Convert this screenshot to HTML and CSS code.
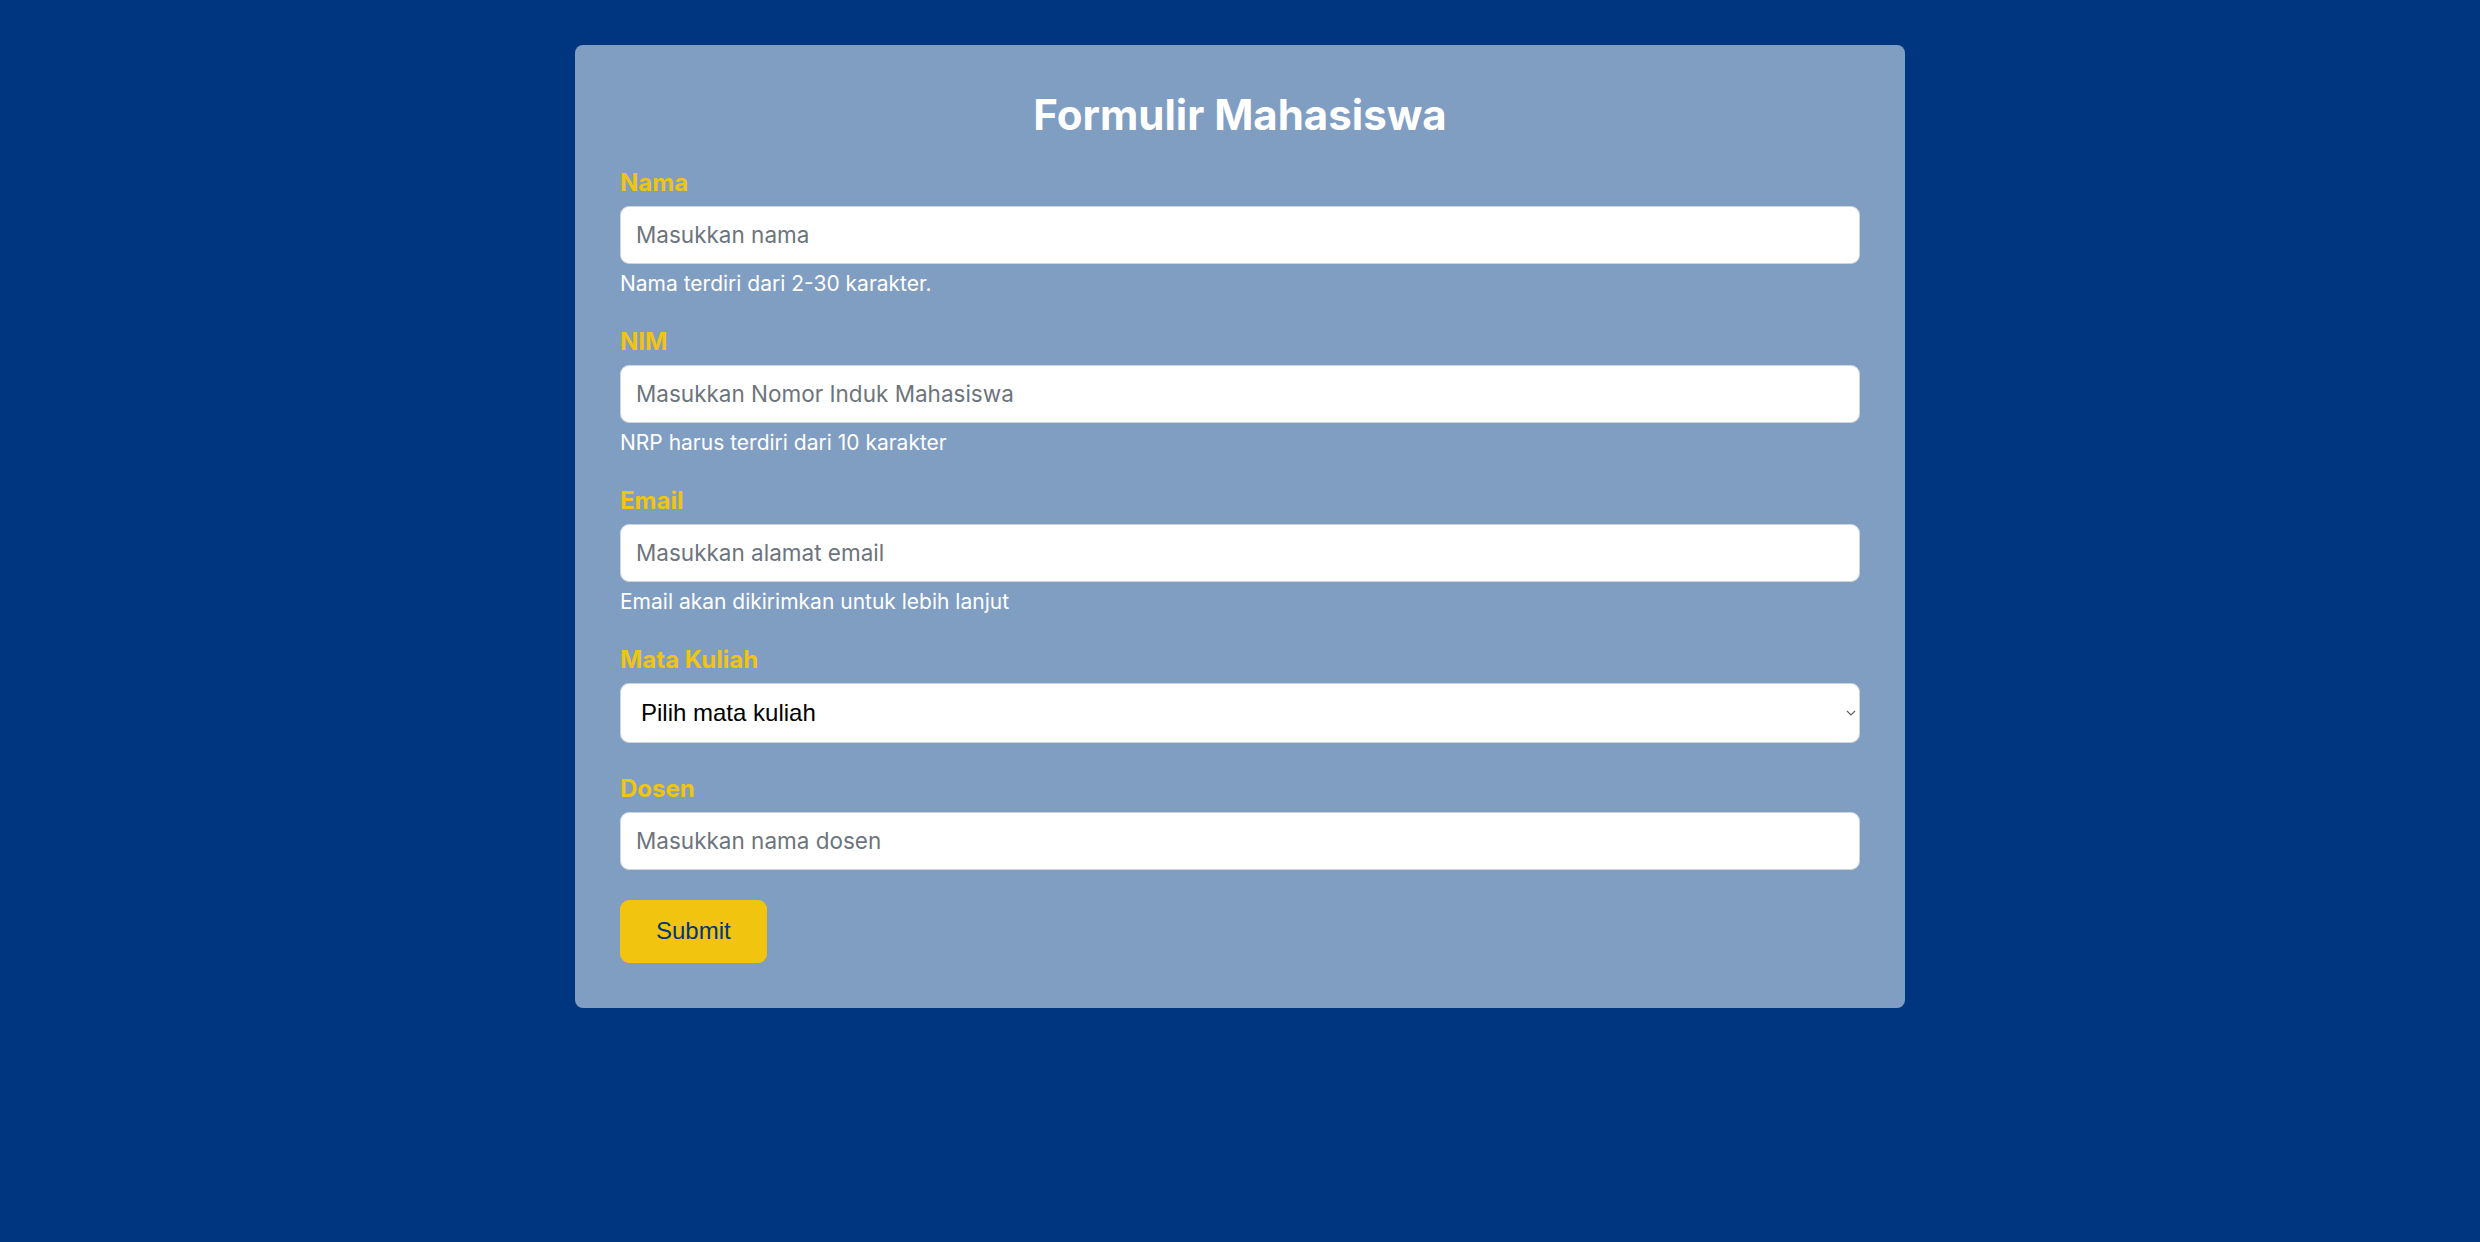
FILE: index.html
```html
<!DOCTYPE html>
<html lang="id">
<head>
<meta charset="utf-8">
<title>Formulir Mahasiswa</title>
<link rel="stylesheet" href="styles.css">
</head>
<body class="page">
  <main class="card">
    <h1 class="card-title">Formulir Mahasiswa</h1>
    <form class="form">
      <div class="field">
        <label class="field-label" for="nama">Nama</label>
        <input class="field-input" id="nama" type="text" placeholder="Masukkan nama">
        <div class="field-help">Nama terdiri dari 2-30 karakter.</div>
      </div>
      <div class="field">
        <label class="field-label" for="nim">NIM</label>
        <input class="field-input" id="nim" type="text" placeholder="Masukkan Nomor Induk Mahasiswa">
        <div class="field-help">NRP harus terdiri dari 10 karakter</div>
      </div>
      <div class="field">
        <label class="field-label" for="email">Email</label>
        <input class="field-input" id="email" type="email" placeholder="Masukkan alamat email">
        <div class="field-help">Email akan dikirimkan untuk lebih lanjut</div>
      </div>
      <div class="field field-select">
        <label class="field-label" for="matkul">Mata Kuliah</label>
        <div class="select-wrap">
          <select class="field-dropdown" id="matkul">
            <option>Pilih mata kuliah</option>
          </select>
          <svg class="select-arrow" width="10" height="6" viewBox="0 0 10 6" aria-hidden="true">
            <path d="M1 1 L5 5 L9 1" fill="none" stroke="#5f6368" stroke-width="1.2"/>
          </svg>
        </div>
      </div>
      <div class="field field-last">
        <label class="field-label" for="dosen">Dosen</label>
        <input class="field-input" id="dosen" type="text" placeholder="Masukkan nama dosen">
      </div>
      <div class="actions">
        <button class="submit" type="submit">Submit</button>
      </div>
    </form>
  </main>
</body>
</html>
```

FILE: styles.css
```css
* { box-sizing: border-box; }

html, body { height: 100%; }

.page {
  margin: 0;
  padding-top: 45px;
  background: #003580;
  font-family: Inter, "Noto Sans", sans-serif;
}

.card {
  width: 1330px;
  margin: 0 auto;
  padding: 45px;
  background: #809dc2;
  border-radius: 8px;
}

.card-title {
  margin: 0 0 24.6px;
  font-size: 42px;
  line-height: 1.2;
  font-weight: 700;
  color: #ffffff;
  text-align: center;
}

.form {
  display: flex;
  flex-direction: column;
}

.field {
  display: flex;
  flex-direction: column;
  margin-bottom: 24px;
}

.field-select { margin-bottom: 28px; }
.field-last { margin-bottom: 30px; }

.field-label {
  margin-bottom: 5px;
  font-size: 24px;
  line-height: 36px;
  font-weight: 700;
  color: #f1c40f;
}

.field-input {
  height: 58px;
  padding: 0 15px;
  border: 1px solid #ced4da;
  border-radius: 9px;
  background: #ffffff;
  font-family: Inter, "Noto Sans", sans-serif;
  font-size: 22.5px;
  color: #212529;
  outline: none;
}

.field-input::placeholder {
  color: #6c757d;
  opacity: 1;
}

.select-wrap {
  position: relative;
  display: flex;
  flex-direction: column;
}

.field-dropdown {
  -webkit-appearance: none;
  appearance: none;
  height: 60px;
  padding: 0 30px 0 20px;
  border: 1px solid #ced4da;
  border-radius: 9px;
  background-color: #ffffff;
  font-family: "Liberation Sans", Arial, sans-serif;
  font-size: 24px;
  color: #000000;
  outline: none;
}

.select-arrow {
  position: absolute;
  right: 4px;
  top: 27px;
  pointer-events: none;
}

.field-help {
  margin-top: 4px;
  font-size: 21px;
  line-height: 32px;
  color: #ffffff;
}

.actions { display: flex; }

.submit {
  height: 63px;
  padding: 0 36px;
  border: none;
  border-radius: 9px;
  background: #f1c40f;
  font-family: "Liberation Sans", Arial, sans-serif;
  font-size: 24px;
  color: #003580;
  cursor: pointer;
}
```
